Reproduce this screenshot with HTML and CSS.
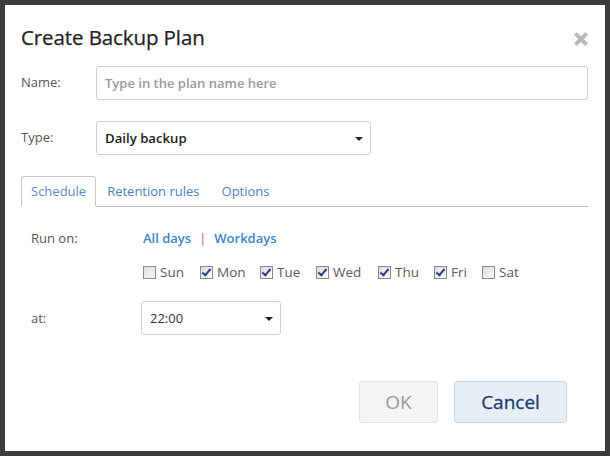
FILE: index.html
```html
<!DOCTYPE html>
<html>
<head>
<meta charset="utf-8">
<link rel="stylesheet" href="styles.css">
</head>
<body>
<div class="dialog">
  <div class="header">
    <h1 class="title">Create Backup Plan</h1>
    <span class="close">&#x2715;</span>
  </div>
  <div class="field name-row">
    <label class="label">Name:</label>
    <div class="input">Type in the plan name here</div>
  </div>
  <div class="field type-row">
    <label class="label">Type:</label>
    <div class="select type-select"><span class="val">Daily backup</span><span class="caret"></span></div>
  </div>
  <div class="tabs">
    <div class="tab active">Schedule</div>
    <div class="tab">Retention rules</div>
    <div class="tab">Options</div>
    <div class="tab-fill"></div>
  </div>
  <div class="schedule">
    <div class="srow">
      <span class="slabel">Run on:</span>
      <div class="links"><a class="link">All days</a><span class="sep">|</span><a class="link">Workdays</a></div>
    </div>
    <div class="days">
      <span class="day d-sun"><span class="cb"></span>Sun</span>
      <span class="day d-mon"><span class="cb on"></span>Mon</span>
      <span class="day d-tue"><span class="cb on"></span>Tue</span>
      <span class="day d-wed"><span class="cb on"></span>Wed</span>
      <span class="day d-thu"><span class="cb on"></span>Thu</span>
      <span class="day d-fri"><span class="cb on"></span>Fri</span>
      <span class="day d-sat"><span class="cb"></span>Sat</span>
    </div>
    <div class="srow at-row">
      <span class="slabel">at:</span>
      <div class="select time-select"><span class="val time">22:00</span><span class="caret"></span></div>
    </div>
  </div>
  <div class="footer">
    <button class="btn ok">OK</button>
    <button class="btn cancel">Cancel</button>
  </div>
</div>
</body>
</html>
```
FILE: styles.css
```css
html, body {
  margin: 0;
  padding: 0;
}
body {
  width: 610px;
  height: 456px;
  background: #3c3c3c;
  padding: 5px;
  box-sizing: border-box;
  font-family: "Open Sans", "Noto Sans", sans-serif;
}
.dialog {
  width: 600px;
  height: 446px;
  background: #fff;
  box-sizing: border-box;
  padding: 0 17px 0 16px;
  position: relative;
}
.header {
  display: flex;
  align-items: center;
  justify-content: space-between;
  height: 61px;
}
.title {
  margin: 0;
  font-size: 20.5px;
  font-weight: 400;
  color: #222;
  letter-spacing: -0.1px;
  padding-top: 3px;
  -webkit-text-stroke: 0.25px #222;
}
.close {
  color: #b8b8b8;
  font-size: 19px;
  font-weight: 700;
  margin-right: -1px;
  padding-top: 7px;
  -webkit-text-stroke: 1.2px #b8b8b8;
}
.field {
  display: flex;
  align-items: center;
}
.label {
  width: 75px;
  font-size: 13px;
  color: #555;
  margin-top: -2px;
}
.input {
  flex: 1;
  height: 34px;
  box-sizing: border-box;
  border: 1px solid #cfcfcf;
  border-radius: 3px;
  padding: 0 8px;
  display: flex;
  align-items: center;
  font-size: 13px;
  font-weight: 600;
  color: #9a9a9a;
}
.type-row { margin-top: 21px; }
.select {
  height: 34px;
  box-sizing: border-box;
  border: 1px solid #cfcfcf;
  border-radius: 3px;
  display: flex;
  align-items: center;
  justify-content: space-between;
  padding: 0 7px 0 8px;
}
.type-select { width: 275px; }
.val {
  font-size: 13.2px;
  font-weight: 600;
  color: #1c1c1c;
}
.caret {
  width: 0;
  height: 0;
  border-left: 4px solid transparent;
  border-right: 4px solid transparent;
  border-top: 4px solid #1c2230;
  margin-top: 2px;
}
.tabs {
  display: flex;
  margin-top: 21px;
  height: 31px;
}
.tab {
  padding: 0 11px 1px 11px;
  font-size: 13px;
  color: #4a7fc0;
  display: flex;
  align-items: center;
  border-bottom: 1px solid #bdbdbd;
}
.tab.active {
  border: 1px solid #c8c8c8;
  border-bottom-color: #fff;
  border-radius: 3px 3px 0 0;
  padding: 0 9px 1px 9px;
  color: #5e89c4;
}
.tab-fill {
  flex: 1;
  border-bottom: 1px solid #bdbdbd;
}
.schedule {
  padding-left: 10px;
}
.srow {
  display: flex;
  align-items: center;
}
.srow:first-child { margin-top: 22px; }
.slabel {
  width: 112px;
  font-size: 13px;
  color: #555;
}
.links {
  display: flex;
  align-items: center;
  font-size: 13px;
  font-weight: 600;
}
.link {
  color: #3a86c8;
}
.sep {
  color: #c0506c;
  font-weight: 400;
  margin: 0 8px 0 8px;
}
.days {
  display: flex;
  margin-left: 112px;
  margin-top: 16px;
  font-size: 13.5px;
  color: #5a5a5a;
}
.day {
  display: flex;
  align-items: center;
}
.cb {
  width: 11px;
  height: 11px;
  border: 1px solid #8a8a8a;
  background: linear-gradient(135deg, #dcdcdc, #fbfbfb);
  margin-right: 4px;
  position: relative;
}
.cb.on::after {
  content: "";
  position: absolute;
  left: 3px;
  top: 0px;
  width: 3px;
  height: 7px;
  border-right: 2px solid #2b3f86;
  border-bottom: 2px solid #2b3f86;
  transform: rotate(40deg);
}
.d-sun { width: 57px; }
.d-mon { width: 60px; }
.d-tue { width: 56px; }
.d-wed { width: 62px; }
.d-thu { width: 56px; }
.d-fri { width: 48px; }
.at-row { margin-top: 20px; }
.at-row .slabel { width: 110px; }
.time-select { width: 140px; }
.val.time { font-weight: 400; color: #333; font-size: 13px; }
.footer {
  display: flex;
  justify-content: flex-end;
  gap: 16px;
  margin-top: 46px;
  padding-right: 21px;
}
.btn {
  height: 42px;
  box-sizing: border-box;
  border-radius: 3px;
  font-family: "Open Sans", "Noto Sans", sans-serif;
  font-size: 19px;
  padding: 0;
}
.ok {
  width: 79px;
  background: #f4f4f4;
  border: 1px solid #e2e2e2;
  color: #9a9a9a;
}
.cancel {
  width: 113px;
  background: #e8eef6;
  border: 1px solid #c7d7ea;
  color: #173f6c;
  -webkit-text-stroke: 0.3px #173f6c;
}
```
